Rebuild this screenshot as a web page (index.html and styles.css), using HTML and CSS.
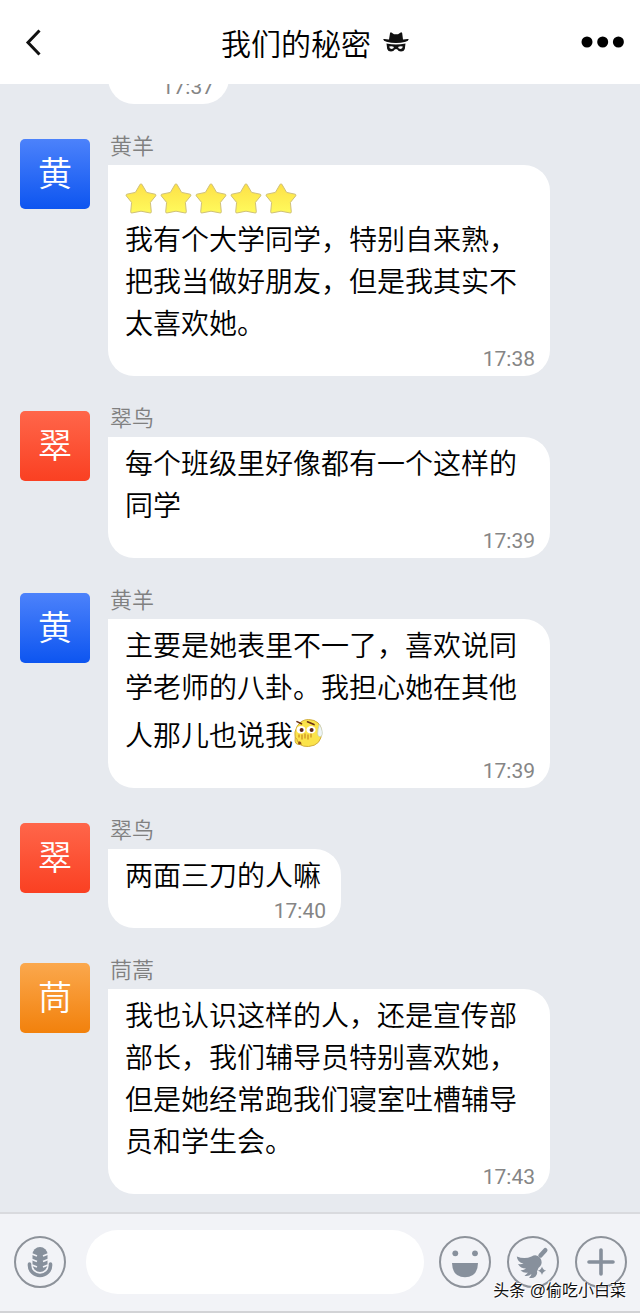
FILE: index.html
```html
<!DOCTYPE html>
<html lang="zh-CN">
<head>
<meta charset="utf-8">
<meta name="viewport" content="width=device-width, initial-scale=1">
<title>我们的秘密</title>
<link rel="stylesheet" href="styles.css">
</head>
<body>
<svg class="defs" aria-hidden="true">
  <defs>
    <linearGradient id="gold" x1="0" y1="0" x2="0" y2="1">
      <stop offset="0" stop-color="#fde047"/><stop offset="1" stop-color="#fffa5c"/>
    </linearGradient>
    <symbol id="star" viewBox="0 0 32 31">
      <path d="M16 .8 Q16.6 .8 17.2 1.8 L21.6 9.4 L30.2 11.2 Q31.6 11.700 30.700 12.900 L25.400 19.400 L26.300 28.800 Q26.300 30.400 24.800 29.900 L16 28.200 L7.200 29.900 Q5.700 30.400 5.700 28.800 L6.600 19.400 L1.300 12.900 Q.4 11.700 1.800 11.200 L10.400 9.400 L14.800 1.800 Q15.400 .8 16 .8Z" fill="url(#gold)" stroke="#cfc07a" stroke-width="1"/>
    </symbol>
  </defs>
</svg>
<header class="topbar">
  <button class="icon-button" aria-label="返回">
    <svg width="18" height="28" viewBox="0 0 18 28"><path d="M15.500 2.500 L4 14.500 L15.500 26.500" fill="none" stroke="#111" stroke-width="3"/></svg>
  </button>
  <h1 class="title">我们的秘密
    <svg width="26" height="20" viewBox="0 0 26 20" aria-hidden="true">
      <path d="M6 7.500 L7 1.200 Q7.600 -.2 8.800 .7 L11 2.200 H15 L17.300 .7 Q18.600 -.2 19.200 1.200 L20 7.500 Q24 6.600 25.600 7 Q26 8.800 22.600 9.800 Q13 12.200 3.400 9.800 Q0 8.800 .3 7 Q2 6.600 6 7.500Z" fill="#111"/>
      <path fill-rule="evenodd" d="M3.500 11.400 Q13 13.600 22.500 11.400 L21.800 17 Q21 19.600 18 19.600 Q15.200 19.600 14.400 17.600 Q13 16.200 11.700 17.600 Q10.800 19.600 8 19.600 Q5 19.600 4.200 17Z M6.200 14.600 Q6.400 17 8.400 17 Q10.600 17 11 14.900 Q8.600 13.800 6.200 14.600Z M15 14.900 Q15.400 17 17.600 17 Q19.600 17 19.800 14.600 Q17.400 13.800 15 14.900Z" fill="#111"/>
    </svg>
  </h1>
  <button class="icon-button more" aria-label="更多">
    <svg width="46" height="12" viewBox="0 0 46 12"><circle cx="7" cy="6" r="5.500"/><circle cx="22.700" cy="6" r="5.500"/><circle cx="38.400" cy="6" r="5.500"/></svg>
  </button>
</header>

<main class="chat">
  <article class="message continued">
    <div class="bubble"><time class="time">17:37</time></div>
  </article>
  <article class="message">
    <div class="avatar blue">黄</div>
    <div class="body">
      <h2 class="name">黄羊</h2>
      <div class="bubble">
        <p class="text"><svg class="star" aria-hidden="true"><use href="#star"/></svg><svg class="star" aria-hidden="true"><use href="#star"/></svg><svg class="star" aria-hidden="true"><use href="#star"/></svg><svg class="star" aria-hidden="true"><use href="#star"/></svg><svg class="star" aria-hidden="true"><use href="#star"/></svg><br>我有个大学同学，特别自来熟，把我当做好朋友，但是我其实不太喜欢她。</p>
        <time class="time">17:38</time>
      </div>
    </div>
  </article>
  <article class="message">
    <div class="avatar red">翠</div>
    <div class="body">
      <h2 class="name">翠鸟</h2>
      <div class="bubble">
        <p class="text">每个班级里好像都有一个这样的同学</p>
        <time class="time">17:39</time>
      </div>
    </div>
  </article>
  <article class="message">
    <div class="avatar blue">黄</div>
    <div class="body">
      <h2 class="name">黄羊</h2>
      <div class="bubble">
        <p class="text">主要是她表里不一了，喜欢说同学老师的八卦。我担心她在其他人那儿也说我<svg class="emoji" viewBox="0 0 30 30" aria-hidden="true">
          <path d="M15.500 1.500 Q28 2 28.600 14 Q28.600 27.500 15.500 28.500 Q10 28.800 7 26.500 Q1 27 2.200 20 Q.8 14 4 8.500 Q8 1.600 15.500 1.500Z" fill="#fbe34a" stroke="#d2ae3c"/>
          <path d="M4 3.600 L8.500 5.800 M14.500 3.800 L21 6.600" stroke="#6b3015" stroke-width="1.600" stroke-linecap="round"/>
          <ellipse cx="8" cy="11.800" rx="4.400" ry="3.700" fill="#fff"/><ellipse cx="18" cy="11.800" rx="4.600" ry="3.700" fill="#fff"/>
          <circle cx="8.600" cy="12" r="2" fill="#5a2418"/><circle cx="18.600" cy="12" r="2" fill="#5a2418"/>
          <path d="M6 16.500v3 M9 16.500v5 M12 15.500v5 M15 16.500v5 M18 15.500v4" stroke="#c98b20" stroke-width="1.200"/>
          <path d="M26.500 6 Q31 15 28.500 18 Q25.500 20 24.600 16 Q24.600 11 26.500 6Z" fill="#eef5f8" stroke="#c5cdb4" stroke-width=".7"/>
          <path d="M2.500 19.500 Q4.600 21.500 4.600 23.600 Q8.400 23.200 8.600 27" fill="none" stroke="#c9962a" stroke-width=".8"/>
          <circle cx="6.600" cy="25" r="1.600" fill="#8a4b1b"/>
        </svg></p>
        <time class="time">17:39</time>
      </div>
    </div>
  </article>
  <article class="message">
    <div class="avatar red">翠</div>
    <div class="body">
      <h2 class="name">翠鸟</h2>
      <div class="bubble">
        <p class="text">两面三刀的人嘛</p>
        <time class="time">17:40</time>
      </div>
    </div>
  </article>
  <article class="message">
    <div class="avatar orange">茼</div>
    <div class="body">
      <h2 class="name">茼蒿</h2>
      <div class="bubble">
        <p class="text">我也认识这样的人，还是宣传部部长，我们辅导员特别喜欢她，但是她经常跑我们寝室吐槽辅导员和学生会。</p>
        <time class="time">17:43</time>
      </div>
    </div>
  </article>
</main>

<footer class="composer">
  <button class="round" aria-label="语音">
    <svg viewBox="0 0 52 52">
      <rect x="18.500" y="11" width="15" height="25" rx="7.500" fill="#87909c"/>
      <path d="M18 18 l5 2 M18 23.500 l5 2 M18 29 l5 2 M34 18 l-5 2 M34 23.500 l-5 2 M34 29 l-5 2" stroke="#f2f3f7" stroke-width="1.700"/>
      <path d="M15.500 28 V29.500 A10.500 10 0 0 0 36.500 29.500 V28" fill="none" stroke="#87909c" stroke-width="3.600" stroke-linecap="round"/>
    </svg>
  </button>
  <input class="field" type="text" aria-label="输入消息">
  <div class="tools">
    <button class="round" aria-label="表情">
      <svg viewBox="0 0 52 52"><g fill="#87909c"><circle cx="16.300" cy="17.300" r="2.900"/><circle cx="36" cy="17.300" r="2.900"/><path d="M13 27 H39 Q38.600 41.300 26 41.300 Q13.400 41.300 13 27Z"/></g></svg>
    </button>
    <button class="round" aria-label="清理">
      <svg viewBox="0 0 52 52"><g fill="#87909c">
        <path d="M33.500 19.500 L38.300 14.200" stroke="#87909c" stroke-width="4.400" stroke-linecap="round"/>
        <path d="M24.500 20.500 Q29.500 17.500 33.200 22 Q36 26 33.400 30 Q30.500 32 30 35.500 Q30.800 38 28.500 40.500 Q25.500 43 22 41.500 Q24 40 24.500 38 Q21.500 40.800 17.500 39.800 Q20 38 21 36.500 Q17.500 37.500 13.500 34.500 Q17.500 34 19 32.500 Q13.500 32.500 11 28 Q14.500 28.500 16.500 27.500 Q10.500 26.500 9.800 20.500 Q17.500 23.500 24.500 20.500Z"/>
        <path d="M35 30.500 Q35.800 34 39.200 34.800 Q35.800 35.600 35 39 Q34.200 35.600 30.800 34.800 Q34.200 34 35 30.500Z"/></g>
      </svg>
    </button>
    <button class="round" aria-label="添加">
      <svg viewBox="0 0 52 52"><path d="M26 14 V38 M14 26 H38" stroke="#87909c" stroke-width="3.600" stroke-linecap="round"/></svg>
    </button>
  </div>
  <span class="watermark">头条 @偷吃小白菜</span>
</footer>
</body>
</html>
```
FILE: styles.css
```css
* { box-sizing: border-box; }
body {
  margin: 0;
  height: 100vh;
  display: flex;
  flex-direction: column;
  background: #e7eaef;
  color: #000;
  font-family: Roboto, "Noto Sans CJK SC", sans-serif;
  font-weight: 350;
}
h1, h2, p { margin: 0; font-weight: 350; }
button { border: 0; padding: 0; background: none; display: flex; }
.defs { position: absolute; width: 0; height: 0; }

.topbar {
  flex: none;
  height: 84px;
  padding: 0 14px 0 24px;
  display: grid;
  grid-template-columns: 46px 1fr 66px;
  align-items: center;
  background: #fff;
}
.more { justify-self: end; }
.title {
  display: flex;
  justify-content: center;
  align-items: center;
  gap: 12px;
  font-family: "Noto Sans CJK SC", sans-serif;
  font-size: 30px;
  line-height: 40px;
}

.chat {
  flex: 1;
  min-height: 0;
  overflow: hidden;
  display: flex;
  flex-direction: column;
  justify-content: flex-end;
  gap: 35px;
  padding: 0 20px 18px;
}
.message { flex: none; display: flex; align-items: flex-start; gap: 18px; }
.continued { padding-left: 88px; }
.avatar {
  flex: none;
  width: 70px;
  height: 70px;
  border-radius: 5px;
  color: #fff;
  font-size: 34px;
  line-height: 70px;
  text-align: center;
}
.blue { background: linear-gradient(#4c82fb, #0d55f0); }
.red { background: linear-gradient(#ff664a, #fa4022); }
.orange { background: linear-gradient(#fba84d, #f2810c); }
.body { min-width: 0; display: flex; flex-direction: column; align-items: flex-start; }
.name {
  margin: 0 0 10px 2px;
  color: #808080;
  font-size: 22px;
  line-height: 16px;
}
.bubble {
  max-width: 442px;
  padding: 4px 20px 7px 17px;
  display: flex;
  flex-direction: column;
  background: #fff;
  border-radius: 0 26px 26px 26px;
}
.continued .bubble { width: 121px; height: 60px; justify-content: flex-end; }
.text {
  font-family: "Noto Sans CJK SC", sans-serif;
  font-size: 28px;
  line-height: 42px;
}
.time {
  align-self: flex-end;
  margin: 6px -5px 0 0;
  color: #858585;
  font-size: 21px;
  font-weight: 400;
  line-height: 20px;
}
.star {
  width: 32px;
  height: 48px;
  margin-right: 3px;
  padding: 14px 0 3px;
  vertical-align: bottom;
}
.emoji {
  width: 30px;
  height: 48px;
  padding: 11px 0 7px;
  vertical-align: bottom;
}

.composer {
  flex: none;
  position: relative;
  display: flex;
  align-items: center;
  padding: 16px 13px 17px 14px;
  background: #f2f3f7;
  border-top: 2px solid #d9dade;
  border-bottom: 2px solid #d2d3d6;
}
.round {
  flex: none;
  width: 52px;
  height: 52px;
  border: 2px solid #8d929a;
  border-radius: 50%;
}
.round svg { width: 52px; height: 52px; margin: -2px; flex: none; }
.field {
  flex: 1;
  min-width: 0;
  height: 64px;
  margin: 0 15px 0 20px;
  padding: 0 28px;
  border: 0;
  border-radius: 32px;
  background: #fff;
  font: inherit;
  font-size: 28px;
}
.tools { display: flex; gap: 16px; }
.watermark {
  position: absolute;
  right: 14px;
  bottom: 8px;
  color: #111;
  font-family: "Liberation Sans", "Noto Sans CJK SC", sans-serif;
  font-size: 16px;
  font-weight: 400;
  line-height: 24px;
  white-space: nowrap;
  text-shadow: -1px -1px 0 #fff, 1px 1px 0 #fff;
}
```
